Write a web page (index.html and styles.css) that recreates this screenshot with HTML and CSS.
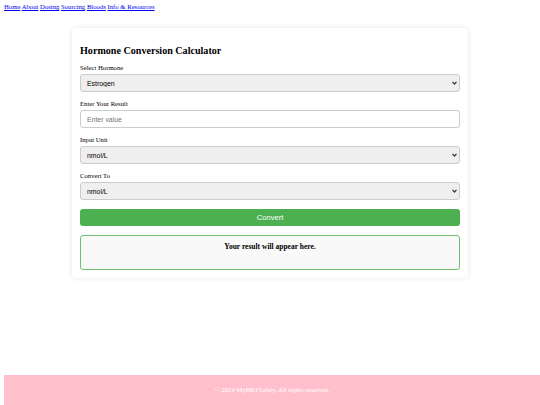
FILE: index.html
```html
<!DOCTYPE html>
<html lang="en">
<head>
<meta charset="utf-8">
<title>Hormone Conversion Calculator</title>
<link rel="stylesheet" href="styles.css">
</head>
<body>
<nav class="nav">
  <a href="#">Home</a>
  <a href="#">About</a>
  <a href="#">Dosing</a>
  <a href="#">Sourcing</a>
  <a href="#">Bloods</a>
  <a href="#">Info &amp; Resources</a>
</nav>
<main class="main">
  <section class="card">
    <h2 class="title">Hormone Conversion Calculator</h2>
    <div class="group">
      <label class="label" for="hormone">Select Hormone</label>
      <div class="select-wrap">
        <select id="hormone" class="field select">
          <option>Estrogen</option>
        </select>
        <svg class="arrow" width="5" height="4" viewBox="0 0 5 4"><path d="M0.5 0.8 L2.5 3 L4.5 0.8" fill="none" stroke="#333" stroke-width="1.2"/></svg>
      </div>
    </div>
    <div class="group">
      <label class="label" for="value">Enter Your Result</label>
      <input id="value" class="field input" type="text" placeholder="Enter value">
    </div>
    <div class="group">
      <label class="label" for="unit">Input Unit</label>
      <div class="select-wrap">
        <select id="unit" class="field select">
          <option>nmol/L</option>
        </select>
        <svg class="arrow" width="5" height="4" viewBox="0 0 5 4"><path d="M0.5 0.8 L2.5 3 L4.5 0.8" fill="none" stroke="#333" stroke-width="1.2"/></svg>
      </div>
    </div>
    <div class="group">
      <label class="label" for="to">Convert To</label>
      <div class="select-wrap">
        <select id="to" class="field select">
          <option>nmol/L</option>
        </select>
        <svg class="arrow" width="5" height="4" viewBox="0 0 5 4"><path d="M0.5 0.8 L2.5 3 L4.5 0.8" fill="none" stroke="#333" stroke-width="1.2"/></svg>
      </div>
    </div>
    <button class="btn" type="button">Convert</button>
    <div class="result">Your result will appear here.</div>
  </section>
</main>
<footer class="footer">© 2024 MyHRTSafety. All rights reserved.</footer>
</body>
</html>
```

FILE: styles.css
```css
html, body {
  margin: 0;
  padding: 0;
}
body {
  font-family: "Liberation Serif", "Times New Roman", serif;
  font-size: 6.7px;
  color: #000;
  background: #fff;
  min-height: 405px;
  display: flex;
  flex-direction: column;
}
.nav {
  padding: 3px 0 0 4px;
  line-height: 8px;
}
.nav a {
  color: #0000ee;
  text-decoration: underline;
}
.main {
  flex: 1;
  display: flex;
  justify-content: center;
  align-items: flex-start;
  padding-top: 17px;
}
.card {
  width: 380px;
  padding: 8px;
  background: #fff;
  border-radius: 4px;
  box-shadow: 0 0 5px rgba(0, 0, 0, 0.1);
}
.title {
  font-size: 10.1px;
  line-height: 13px;
  font-weight: bold;
  margin: 8px 0 6px;
}
.group {
  display: flex;
  flex-direction: column;
  margin-bottom: 7px;
}
.label {
  display: block;
  line-height: 9px;
  margin-bottom: 2px;
}
.select-wrap {
  position: relative;
}
.arrow {
  position: absolute;
  right: 3px;
  top: 7px;
  pointer-events: none;
}
.field {
  box-sizing: border-box;
  width: 100%;
  height: 18px;
  margin: 0;
  border: 1px solid #cccccc;
  border-radius: 3px;
  font-family: "Liberation Sans", Arial, sans-serif;
  font-size: 6.9px;
  color: #000;
}
.select {
  display: block;
  appearance: none;
  -webkit-appearance: none;
  background-color: #efefef;
  padding: 0 12px 0 6px;
}
.input {
  background: #fff;
  padding: 0 6px;
}
.input::placeholder {
  color: #757575;
}
.btn {
  display: block;
  box-sizing: border-box;
  width: 100%;
  height: 17px;
  margin: 9px 0 9px;
  border: none;
  border-radius: 3px;
  background: #4caf50;
  color: #fff;
  font-family: "Liberation Sans", Arial, sans-serif;
  font-size: 7.6px;
  padding: 0;
}
.result {
  box-sizing: border-box;
  height: 35px;
  padding-top: 6px;
  border: 1px solid #6fbf72;
  border-radius: 3px;
  background: #f9f9f9;
  text-align: center;
  font-weight: bold;
  font-size: 7.5px;
  line-height: 9px;
}
.footer {
  margin-left: 4px;
  height: 30px;
  line-height: 30px;
  background: #ffc0cb;
  color: #fff;
  text-align: center;
}
```
